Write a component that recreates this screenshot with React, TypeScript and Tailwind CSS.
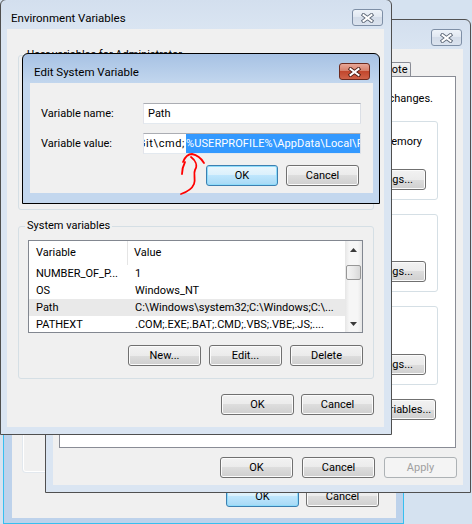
import React from "react";

type BtnProps = {
  children?: React.ReactNode;
  kind?: "normal" | "default" | "disabled";
  w?: string;
};

function Btn({ children, kind = "normal", w = "w-[73px]" }: BtnProps) {
  let look =
    "border-[#707070] bg-[linear-gradient(#f2f2f2,#ebebeb_50%,#dddddd_50%,#cfcfcf)] shadow-[inset_0_0_0_1px_#fbfbfb] text-black";
  if (kind === "default")
    look =
      "border-[#3c7fb1] bg-[linear-gradient(#eaf6fd,#d9f0fc_50%,#bee6fd_50%,#a7d9f5)] shadow-[inset_0_0_0_1px_#8fdcfa] text-black";
  if (kind === "disabled") look = "border-[#adb2b5] bg-[#f4f4f4] text-[#a0a0a0]";
  return (
    <div className={`flex h-[21px] shrink-0 items-center justify-center overflow-hidden whitespace-nowrap rounded-[3px] border ${w} ${look}`}>
      {children}
    </div>
  );
}

function CloseBtn({ active = false }: { active?: boolean }) {
  return (
    <div
      className={`flex h-[17px] w-[31px] items-center justify-center rounded-[3px] border ${
        active
          ? "border-[#6d2b1f] bg-[linear-gradient(#e8a798,#d6806b_45%,#c2472d_50%,#cf6248)]"
          : "border-[#7e8fa6] bg-[linear-gradient(#eef3f9,#e1e8f1_45%,#d3dce9_50%,#dbe3ee)]"
      }`}
    >
      <svg width="13" height="10" viewBox="0 0 13 10">
        <path d="M2.5 2 L10.5 8 M10.5 2 L2.5 8" stroke={active ? "#4b1b12" : "#5b6676"} strokeWidth="3.8" strokeLinecap="square" />
        <path d="M2.5 2 L10.5 8 M10.5 2 L2.5 8" stroke="#ffffff" strokeWidth="2" strokeLinecap="square" />
      </svg>
    </div>
  );
}

// window left behind everything, only its lower edge shows
function BackWindow() {
  return (
    <div className="absolute left-[3px] top-[300px] h-[224px] w-[401px] border border-[#36bff0] bg-[#bdd2eb] pl-[8px] pr-[7px] pt-[1px]">
      <div className="flex h-[216px] flex-col bg-[#f0f0f0]">
        <div className="ml-[11px] mt-[60px] h-[110px] w-[350px] rounded-[3px] border border-white shadow-[0_0_0_1px_#e2e8ee]" />
        <div className="mt-[14px] flex justify-end gap-[7px] pr-[17px]">
          <Btn kind="default">OK</Btn>
          <Btn>Cancel</Btn>
        </div>
      </div>
    </div>
  );
}

const tabCls =
  "h-[14px] overflow-hidden whitespace-nowrap rounded-t-[2px] border border-b-0 border-[#898c95] bg-[linear-gradient(#f4f4f4,#e2e2e2)] text-center leading-[13px]";

function SystemProps() {
  return (
    <div className="absolute left-[45px] top-[19px] w-[426px] rounded-t-[6px] border border-[#505050] bg-[linear-gradient(#d3dfee,#dae5f2_30px)] px-[7px] pb-[7px]">
      <div className="flex h-[29px] items-start justify-end">
        <div className="mr-[1px] mt-[9px]">
          <CloseBtn />
        </div>
      </div>
      <div className="flex h-[436px] flex-col bg-[#f0f0f0] px-[6px]">
        <div className="mt-[13px] flex h-[14px] items-end">
          <div className={`${tabCls} w-[48px]`} />
          <div className={`${tabCls} w-[78px] border-l-0`} />
          <div className={`${tabCls} w-[56px] border-l-0`} />
          <div className="h-[17px] w-[60px] rounded-t-[2px] border border-b-0 border-l-0 border-[#898c95] bg-white" />
          <div className={`${tabCls} w-[66px] border-l-0`} />
          <div className={`${tabCls} w-[44px] border-l-0`}>Remote</div>
        </div>
        <div className="flex h-[372px] w-[397px] flex-col border border-[#898c95] bg-white">
          <div className="mt-[15px] flex justify-end whitespace-nowrap pr-[22px]">
            <span>You must be logged on as an Administrator to make most of these changes.</span>
          </div>
          <div className="mx-[17px] mt-[15px] h-[79px] min-w-0 rounded-[3px] border border-[#d5dfe5]">
            <div className="mt-[13px] flex justify-end whitespace-nowrap pr-[15px]">
              <span>Visual effects, processor scheduling, memory usage, and virtual memory</span>
            </div>
            <div className="mt-[20px] flex justify-end pr-[11px]">
              <Btn w="w-[75px]">Settings...</Btn>
            </div>
          </div>
          <div className="mx-[17px] mt-[14px] h-[78px] rounded-[3px] border border-[#d5dfe5]">
            <div className="mt-[46px] flex justify-end pr-[11px]">
              <Btn w="w-[75px]">Settings...</Btn>
            </div>
          </div>
          <div className="mx-[17px] mt-[14px] h-[79px] rounded-[3px] border border-[#d5dfe5]">
            <div className="mt-[47px] flex justify-end pr-[11px]">
              <Btn w="w-[75px]">Settings...</Btn>
            </div>
          </div>
          <div className="mt-[14px] flex justify-end pr-[19px]">
            <Btn w="w-[128px]">Environment Variables...</Btn>
          </div>
        </div>
        <div className="mt-[9px] flex justify-end gap-[9px]">
          <Btn>OK</Btn>
          <Btn>Cancel</Btn>
          <Btn kind="disabled">Apply</Btn>
        </div>
      </div>
    </div>
  );
}

const rows = [
  { name: "NUMBER_OF_P...", value: "1", sel: false },
  { name: "OS", value: "Windows_NT", sel: false },
  { name: "Path", value: "C:\\Windows\\system32;C:\\Windows;C:\\...", sel: true },
  { name: "PATHEXT", value: ".COM;.EXE;.BAT;.CMD;.VBS;.VBE;.JS;....", sel: false },
];

function EnvVars() {
  return (
    <div className="absolute left-0 top-[-1px] w-[392px] rounded-t-[6px] border border-[#4f4f4f] bg-[linear-gradient(#d3dfee,#dae5f2_30px)] pb-[7px] pl-[6px] pr-[7px]">
      <div className="flex h-[29px] items-start justify-between">
        <span className="mt-[11px] pl-[4px] text-[11.5px]">Environment Variables</span>
        <div className="mr-[1px] mt-[9px]">
          <CloseBtn />
        </div>
      </div>
      <div className="flex h-[398px] flex-col bg-[#f0f0f0]">
        <fieldset className="ml-[11px] mt-[19px] h-[162px] w-[356px] min-w-0 rounded-[3px] border border-[#d5dfe5]">
          <legend className="ml-[6px] px-[2px]">User variables for Administrator</legend>
        </fieldset>
        <fieldset className="ml-[11px] mt-[9px] h-[160px] w-[356px] min-w-0 rounded-[3px] border border-[#d5dfe5]">
          <legend className="ml-[6px] px-[2px]">System variables</legend>
          <div className="ml-[9px] mt-[7px] flex h-[93px] w-[335px] border border-[#828790] bg-white">
            <div className="flex flex-1 flex-col overflow-hidden">
              <div className="flex h-[24px] shrink-0 items-center">
                <div className="flex h-full w-[99px] items-center border-r border-[#e5e5e5] pl-[7px]">Variable</div>
                <div className="pl-[6px]">Value</div>
              </div>
              {rows.map((r) => (
                <div key={r.name} className={`flex h-[17px] shrink-0 items-center whitespace-nowrap ${r.sel ? "bg-[#e9e9e9]" : ""}`}>
                  <div className="w-[99px] pl-[7px]">{r.name}</div>
                  <div className="pl-[7px]">{r.value}</div>
                </div>
              ))}
            </div>
            <div className="flex w-[17px] flex-col items-center bg-[linear-gradient(90deg,#e6e6e6,#f6f6f6_25%,#f6f6f6_75%,#e6e6e6)]">
              <div className="flex h-[17px] items-center justify-center">
                <svg width="7" height="4" viewBox="0 0 7 4">
                  <path d="M0 4 L3.5 0 L7 4 Z" fill="#3a3a3a" />
                </svg>
              </div>
              <div className="mt-[7px] h-[15px] w-[15px] rounded-[2px] border border-[#979797] bg-[linear-gradient(90deg,#f4f4f4,#e9e9e9_50%,#d8d8d8)]" />
              <div className="flex-1" />
              <div className="flex h-[17px] items-center justify-center">
                <svg width="7" height="4" viewBox="0 0 7 4">
                  <path d="M0 0 L3.5 4 L7 0 Z" fill="#3a3a3a" />
                </svg>
              </div>
            </div>
          </div>
          <div className="mt-[12px] flex justify-end gap-[8px] pr-[10px]">
            <Btn>New...</Btn>
            <Btn>Edit...</Btn>
            <Btn>Delete</Btn>
          </div>
        </fieldset>
        <div className="mt-[15px] flex justify-end gap-[7px] pr-[10px]">
          <Btn>OK</Btn>
          <Btn>Cancel</Btn>
        </div>
      </div>
    </div>
  );
}

function EditVar() {
  return (
    <div className="absolute left-[22px] top-[53px] w-[358px] rounded-t-[6px] border border-black bg-[linear-gradient(#a7c2e4,#c3d7ee_30px)] pb-[10px] pl-[7px] pr-[6px]">
      <div className="flex h-[29px] items-start justify-between">
        <span className="mt-[11px] pl-[4px] text-[11.5px]">Edit System Variable</span>
        <div className="mr-[3px] mt-[9px]">
          <CloseBtn active />
        </div>
      </div>
      <div className="flex h-[110px] flex-col bg-[#f0f0f0] pl-[11px] pt-[20px]">
        <div className="flex h-[21px] items-center">
          <div className="w-[102px]">Variable name:</div>
          <div className="flex h-[21px] w-[218px] items-center border border-[#abadb3] border-b-[#e3e9ef] border-l-[#e2e3ea] border-r-[#dbdfe6] bg-white pl-[4px]">
            Path
          </div>
        </div>
        <div className="mt-[9px] flex h-[21px] items-center">
          <div className="w-[102px]">Variable value:</div>
          <div className="flex h-[21px] w-[218px] items-center overflow-hidden whitespace-nowrap border border-[#abadb3] border-b-[#e3e9ef] border-l-[#e2e3ea] border-r-[#dbdfe6] bg-white">
            <span className="ml-[-6px] shrink-0 pr-[1px] tracking-[0.6px]">{"Git\\cmd;"}</span>
            <span className="flex h-full shrink-0 items-center bg-[#3399ff] tracking-[0.1px] text-white">
              {"%USERPROFILE%\\AppData\\Local\\Programs\\bin"}
            </span>
          </div>
        </div>
        <div className="mt-[11px] flex justify-end gap-[8px] pr-[14px]">
          <Btn kind="default" w="w-[72px]">OK</Btn>
          <Btn>Cancel</Btn>
        </div>
      </div>
    </div>
  );
}

function Scribble() {
  return (
    <svg className="pointer-events-none absolute left-0 top-0" width="472" height="524" viewBox="0 0 472 524">
      <g fill="none" stroke="#ff0000" strokeWidth="1.8" strokeLinecap="round" strokeLinejoin="round">
        <path d="M183 162 C185 157 188 154 192 154 C197 155 201 158 204 163" />
        <path d="M191 157 C195 160 198 165 195 170 C193 174 196 179 194 184 C192 189 187 192 181 194" />
        <path d="M182 174 C182 170 183 166 185 162" />
      </g>
    </svg>
  );
}

export default function App() {
  return (
    <div className="relative h-[524px] w-[472px] overflow-hidden bg-[#d5e2f0] font-['Roboto',sans-serif] text-[11px] leading-[14px] text-black">
      <BackWindow />
      <SystemProps />
      <EnvVars />
      <EditVar />
      <Scribble />
    </div>
  );
}
